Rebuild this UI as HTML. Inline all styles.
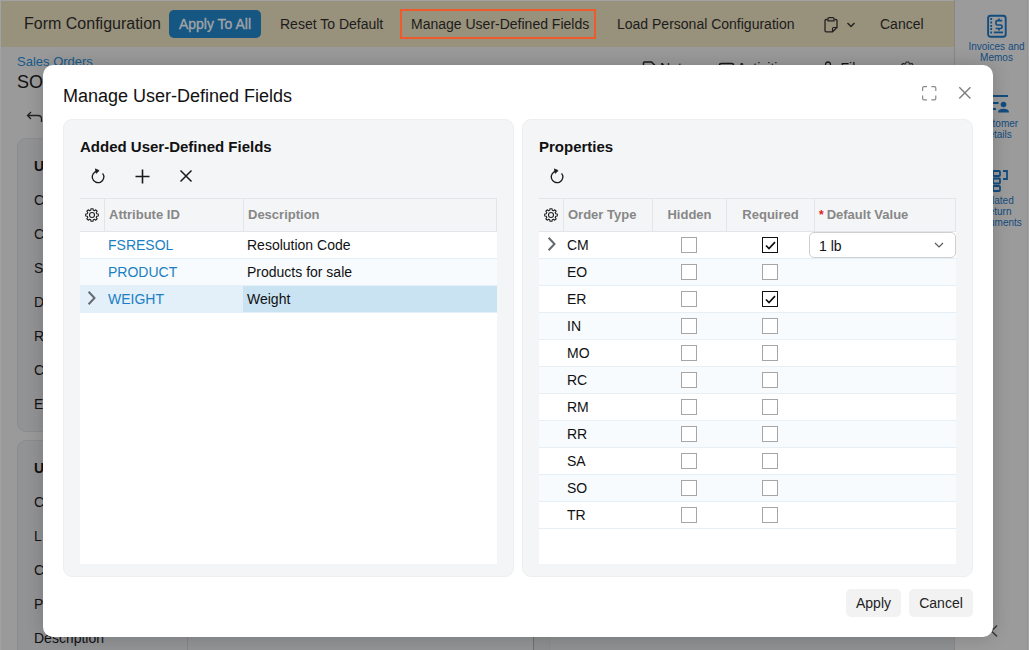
<!DOCTYPE html>
<html><head><meta charset="utf-8">
<style>
*{box-sizing:border-box;margin:0;padding:0}
html,body{width:1029px;height:650px;overflow:hidden}
body{font-family:"Liberation Sans",sans-serif;background:#9a9a9a;position:relative;color:#000}
.abs{position:absolute}
svg{position:absolute;overflow:visible}
/* top bar */
#topline{position:absolute;left:0;top:0;width:1029px;height:1px;background:#a2a2a6}
#leftline{position:absolute;left:0;top:0;width:1px;height:650px;background:#a2a2a6}
#topbar{position:absolute;left:1px;top:1px;width:953px;height:46px;background:#98917b}
.t{position:absolute;font-size:14px;color:#1c1c1c;white-space:nowrap;line-height:16px}
#applyall{position:absolute;left:169px;top:10px;width:92px;height:28px;background:#155682;border-radius:5px;color:#a1a4a6;-webkit-text-stroke:0.35px #a1a4a6;font-size:14px;line-height:28px;text-align:center}
#mudf{position:absolute;left:400px;top:9px;width:196px;height:30px;border:2px solid #ee5a2c}
/* sidebar */
#side{position:absolute;left:954px;top:0;width:75px;height:650px;background:#9b9b9b;border-left:1px solid #878787}
.stx{position:absolute;left:4px;width:75px;text-align:center;font-size:10px;line-height:11px;color:#134c7e}
/* bg page */
.bgt{position:absolute;white-space:nowrap;color:#111;line-height:16px}
.card{position:absolute;left:17px;width:517px;background:#929395;border:1px solid #8b8c8d;border-radius:9px}
/* dialog */
#dlg{position:absolute;left:43px;top:65px;width:950px;height:572px;background:#fff;border-radius:10px;box-shadow:0 0 18px rgba(0,0,0,0.18)}
.panel{position:absolute;top:54px;width:451px;height:458px;background:#f4f5f7;border:1px solid #eceef0;border-radius:9px}
.ptitle{position:absolute;left:16px;top:19px;font-size:15px;font-weight:bold;color:#111;line-height:16px}
.grid{position:absolute;left:16px;top:78px;width:417px;height:366px;background:#fff}
.ghead{position:absolute;left:0;top:0;width:100%;height:34px;background:#f4f5f7;border-top:1px solid #e3e5e8;border-bottom:1px solid #e3e5e8;border-right:1px solid #e3e5e8}
.hc{position:absolute;top:0;height:32px;line-height:32px;font-size:13px;font-weight:bold;color:#878787;border-left:1px solid #e3e5e8;padding-left:4px;white-space:nowrap}
.row{position:absolute;left:0;width:100%;height:27px;border-bottom:1px solid #e6eff6}
.alt{background:#f7fbfd}
.cell{position:absolute;top:0;height:26px;line-height:26px;font-size:14px;white-space:nowrap;color:#111}
.lnk{color:#1a7fc4}
.cb{position:absolute;top:5px;width:16px;height:16px;border:1px solid #a6a6a6;background:#fff;border-radius:0}
.cb.on{border:1.5px solid #111}
.btn{position:absolute;top:524px;height:28px;line-height:28px;background:#f2f2f2;border-radius:5px;font-size:14px;color:#222;text-align:center}
</style></head>
<body>
<div id="topbar">
  <div class="t" style="left:23px;top:14px;font-size:16px;line-height:18px">Form Configuration</div>
  <div id="applyall" style="left:168px;top:9px">Apply To All</div>
  <div class="t" style="left:279px;top:15px">Reset To Default</div>
  <div id="mudf" style="left:399px;top:8px"></div>
  <div class="t" style="left:410px;top:15px">Manage User-Defined Fields</div>
  <div class="t" style="left:616px;top:15px">Load Personal Configuration</div>
  <svg style="left:822px;top:15px" width="16" height="17" viewBox="0 0 16 17">
    <path d="M4.5 3.5 H3.2 Q2 3.5 2 4.8 V14.5 Q2 15.8 3.2 15.8 H9.5 L14 11.5 V4.8 Q14 3.5 12.8 3.5 H11.5" fill="none" stroke="#222" stroke-width="1.3"/>
    <path d="M5 4.8 V2.6 Q5 1.6 6 1.6 H10 Q11 1.6 11 2.6 V4.8 Z" fill="none" stroke="#222" stroke-width="1.2"/>
    <path d="M9.5 15.8 V12.8 Q9.5 11.5 10.8 11.5 H14" fill="none" stroke="#222" stroke-width="1.2"/>
  </svg>
  <svg style="left:844.5px;top:19.5px" width="10" height="8" viewBox="0 0 10 8">
    <path d="M1.5 2 L5 5.5 L8.5 2" fill="none" stroke="#222" stroke-width="1.5"/>
  </svg>
  <div class="t" style="left:879px;top:15px">Cancel</div>
</div>
<div id="topline"></div>
<div id="leftline"></div>

<div id="side">
  <svg style="left:32px;top:14px" width="20" height="24" viewBox="0 0 20 24">
    <rect x="1.1" y="1.8" width="17.6" height="21" rx="2.5" fill="none" stroke="#134c7e" stroke-width="1.9"/>
    <path d="M4.2 5 V5.2 M4.2 8.5 V8.7 M4.2 11.8 V12 M4.2 15 V15.2 M4.2 18.3 V18.5" stroke="#134c7e" stroke-width="1.8" stroke-linecap="square"/>
    <path d="M6.8 18.4 H16" stroke="#134c7e" stroke-width="1.8"/>
    <path d="M15.2 6.6 H10.2 Q9 6.6 9 7.8 V9.8 Q9 11 10.2 11 H13.8 Q15 11 15 12.2 V13.3 Q15 14.5 13.8 14.5 H8.6" fill="none" stroke="#134c7e" stroke-width="1.7"/>
    <path d="M12 4.4 V6.6 M12 14.5 V16.4" stroke="#134c7e" stroke-width="1.7"/>
  </svg>
  <div class="stx" style="top:41px">Invoices and<br>Memos</div>
  <svg style="left:30px;top:94px" width="26" height="20" viewBox="0 0 26 20">
    <path d="M5 2 H23" stroke="#134c7e" stroke-width="2"/>
    <path d="M5 9 H13.5 M5 15 H11" stroke="#134c7e" stroke-width="2"/>
    <circle cx="18.5" cy="10.5" r="2.8" fill="#134c7e"/>
    <path d="M13 18.5 Q13 14.8 18.5 14.8 Q24 14.8 24 18.5 Z" fill="#134c7e"/>
  </svg>
  <div class="stx" style="top:118px">Customer<br>Details</div>
  <svg style="left:35px;top:169px" width="26" height="24" viewBox="0 0 26 24">
    <rect x="3" y="2" width="7" height="5" rx="1" fill="none" stroke="#134c7e" stroke-width="1.8"/>
    <rect x="3" y="9.5" width="7" height="5" rx="1" fill="none" stroke="#134c7e" stroke-width="1.8"/>
    <rect x="3" y="17" width="7" height="5" rx="1" fill="none" stroke="#134c7e" stroke-width="1.8"/>
    <path d="M13 2 H17 V10 H13" fill="none" stroke="#134c7e" stroke-width="1.8"/>
  </svg>
  <div class="stx" style="top:195px">Related<br>Return<br>Documents</div>
</div>

<div class="abs" style="left:1027px;top:0;width:1px;height:650px;background:#939393"></div>
<div class="abs" style="left:1028px;top:0;width:1px;height:650px;background:#a6a6a6"></div>
<!-- background page -->
<div class="bgt" style="left:17px;top:54px;font-size:13px;color:#175a8a">Sales Orders</div>
<div class="bgt" style="left:17px;top:72px;font-size:18px;line-height:20px">SO</div>
<svg style="left:26px;top:110px" width="18" height="14" viewBox="0 0 18 14">
  <path d="M5 2 L1.5 5.5 L5 9 M1.5 5.5 H12 Q15.5 5.5 15.5 9 V12" fill="none" stroke="#222" stroke-width="1.3"/>
</svg>
<svg style="left:635px;top:55px" width="300" height="10" viewBox="0 0 300 10">
  <path d="M8.5 10 V8 Q8.5 7 9.5 7 H16.5 L20 10.5" fill="none" stroke="#1a1a1a" stroke-width="1.5"/>
  <path d="M84.5 10 Q84.5 8.5 86.5 8.5 H96.5 Q98.5 8.5 98.5 10" fill="none" stroke="#1a1a1a" stroke-width="1.5"/>
  <path d="M190.5 10 Q190.5 7 193 7 Q195.5 7 195.5 10" fill="none" stroke="#1a1a1a" stroke-width="1.3"/>
  <path d="M266.5 10 L268 8.5 L270 9 L271.5 7 L273.5 7 L275 9 L277 8.5 L278 10" fill="none" stroke="#2a2a2a" stroke-width="1.2"/>
</svg>
<div class="bgt" style="left:660px;top:60px;font-size:14px">Notes</div>
<div class="bgt" style="left:737px;top:60px;font-size:14px">Activities</div>
<div class="bgt" style="left:840.5px;top:60px;font-size:14px">Files</div>
<div class="card" style="top:138px;height:294px"></div>
<div class="bgt" style="left:34px;top:158px;font-size:14px;font-weight:bold">U</div>
<div class="bgt" style="left:34px;top:192px;font-size:14px">C</div>
<div class="bgt" style="left:34px;top:226px;font-size:14px">C</div>
<div class="bgt" style="left:34px;top:260px;font-size:14px">S</div>
<div class="bgt" style="left:34px;top:294px;font-size:14px">D</div>
<div class="bgt" style="left:34px;top:328px;font-size:14px">R</div>
<div class="bgt" style="left:34px;top:362px;font-size:14px">C</div>
<div class="bgt" style="left:34px;top:396px;font-size:14px">E</div>
<div class="card" style="top:440px;height:260px"></div>
<div class="bgt" style="left:34px;top:460px;font-size:14px;font-weight:bold">U</div>
<div class="bgt" style="left:34px;top:494px;font-size:14px">C</div>
<div class="bgt" style="left:34px;top:528px;font-size:14px">L</div>
<div class="bgt" style="left:34px;top:562px;font-size:14px">C</div>
<div class="bgt" style="left:34px;top:596px;font-size:14px">P</div>
<div class="bgt" style="left:34px;top:630px;font-size:14px">Description</div>
<div class="abs" style="left:187px;top:600px;width:1px;height:50px;background:#858585"></div>
<div class="abs" style="left:550px;top:600px;width:404px;height:50px;background:#8f9091"></div>
<div class="abs" style="left:533px;top:600px;width:17px;height:50px;background:#8d8e8f;border-left:1px solid #707070;border-right:1px solid #8a8a8a"></div>
<svg style="left:988px;top:624px" width="12" height="14" viewBox="0 0 12 14">
  <path d="M9 1.5 L3.5 7 L9 12.5" fill="none" stroke="#3a3a3a" stroke-width="1.6"/>
</svg>

<div id="dlg">
  <div class="abs" style="left:20px;top:21px;font-size:18px;line-height:20px;color:#111">Manage User-Defined Fields</div>
  <svg style="left:879px;top:21px" width="15" height="15" viewBox="0 0 15 15">
    <path d="M0.6 5 V2 Q0.6 0.6 2 0.6 H5 M9.4 0.6 H12.4 Q13.8 0.6 13.8 2 V5 M13.8 9.4 V12.4 Q13.8 13.8 12.4 13.8 H9.4 M5 13.8 H2 Q0.6 13.8 0.6 12.4 V9.4" fill="none" stroke="#8a8a8a" stroke-width="1.2"/>
  </svg>
  <svg style="left:915px;top:21px" width="14" height="14" viewBox="0 0 14 14">
    <path d="M1.3 1.3 L12.4 12.4 M12.4 1.3 L1.3 12.4" stroke="#7d7d7d" stroke-width="1.4"/>
  </svg>

  <div class="panel" style="left:20px">
    <div class="ptitle">Added User-Defined Fields</div>
    <svg style="left:26px;top:47.5px" width="16" height="16" viewBox="0 0 16 16">
      <path d="M12.6 5.3 A5.8 5.8 0 1 1 7.6 3.1" fill="none" stroke="#1a1a1a" stroke-width="1.3"/>
      <path d="M5.4 0.9 L9.1 2.6 L6.3 5.3 Z" fill="#1a1a1a" stroke="#1a1a1a" stroke-width="0.8" stroke-linejoin="round"/>
    </svg>
    <svg style="left:71px;top:49px" width="16" height="16" viewBox="0 0 16 16">
      <path d="M7.5 0.5 V14.5 M0.5 7.5 H14.5" stroke="#1a1a1a" stroke-width="1.6"/>
    </svg>
    <svg style="left:115px;top:49px" width="14" height="14" viewBox="0 0 14 14">
      <path d="M1.5 1.5 L12.5 12.5 M12.5 1.5 L1.5 12.5" stroke="#1a1a1a" stroke-width="1.5"/>
    </svg>
    <div class="grid">
      <div class="ghead">
        <svg style="left:12px;top:16px" width="1" height="1" viewBox="0 0 1 1">
          <path d="M4.74 -1.24 L6.32 -1.02 L6.32 1.02 L4.74 1.24 L4.23 2.47 L5.19 3.75 L3.75 5.19 L2.47 4.23 L1.24 4.74 L1.02 6.32 L-1.02 6.32 L-1.24 4.74 L-2.47 4.23 L-3.75 5.19 L-5.19 3.75 L-4.23 2.47 L-4.74 1.24 L-6.32 1.02 L-6.32 -1.02 L-4.74 -1.24 L-4.23 -2.47 L-5.19 -3.75 L-3.75 -5.19 L-2.47 -4.23 L-1.24 -4.74 L-1.02 -6.32 L1.02 -6.32 L1.24 -4.74 L2.47 -4.23 L3.75 -5.19 L5.19 -3.75 L4.23 -2.47Z" fill="none" stroke="#222" stroke-width="1.1" stroke-linejoin="round"/>
          <circle cx="0" cy="0" r="2.5" fill="none" stroke="#222" stroke-width="1.1"/>
        </svg>
        <div class="hc" style="left:24px;width:139px">Attribute ID</div>
        <div class="hc" style="left:163px;width:255px">Description</div>
      </div>
      <div class="row" style="top:34px"><div class="cell lnk" style="left:28px">FSRESOL</div><div class="cell" style="left:167px">Resolution Code</div></div>
      <div class="row alt" style="top:61px"><div class="cell lnk" style="left:28px">PRODUCT</div><div class="cell" style="left:167px">Products for sale</div></div>
      <div class="row" style="top:88px;background:#e3f0f9;border-bottom-color:#e3f0f9">
        <svg style="left:7px;top:5px" width="10" height="14" viewBox="0 0 10 14"><path d="M1.6 0.8 L7.5 7 L1.6 13.2" fill="none" stroke="#646a70" stroke-width="2"/></svg>
        <div class="cell lnk" style="left:28px">WEIGHT</div><div class="abs" style="left:163px;top:0;width:254px;height:26px;background:#c9e3f3"></div><div class="cell" style="left:167px">Weight</div></div>
    </div>
  </div>

  <div class="panel" style="left:479px">
    <div class="ptitle">Properties</div>
    <svg style="left:26px;top:47.5px" width="16" height="16" viewBox="0 0 16 16">
      <path d="M12.6 5.3 A5.8 5.8 0 1 1 7.6 3.1" fill="none" stroke="#1a1a1a" stroke-width="1.3"/>
      <path d="M5.4 0.9 L9.1 2.6 L6.3 5.3 Z" fill="#1a1a1a" stroke="#1a1a1a" stroke-width="0.8" stroke-linejoin="round"/>
    </svg>
    <div class="grid" id="pgrid">
      <div class="ghead">
        <svg style="left:12px;top:16px" width="1" height="1" viewBox="0 0 1 1">
          <path d="M4.74 -1.24 L6.32 -1.02 L6.32 1.02 L4.74 1.24 L4.23 2.47 L5.19 3.75 L3.75 5.19 L2.47 4.23 L1.24 4.74 L1.02 6.32 L-1.02 6.32 L-1.24 4.74 L-2.47 4.23 L-3.75 5.19 L-5.19 3.75 L-4.23 2.47 L-4.74 1.24 L-6.32 1.02 L-6.32 -1.02 L-4.74 -1.24 L-4.23 -2.47 L-5.19 -3.75 L-3.75 -5.19 L-2.47 -4.23 L-1.24 -4.74 L-1.02 -6.32 L1.02 -6.32 L1.24 -4.74 L2.47 -4.23 L3.75 -5.19 L5.19 -3.75 L4.23 -2.47Z" fill="none" stroke="#222" stroke-width="1.1" stroke-linejoin="round"/>
          <circle cx="0" cy="0" r="2.5" fill="none" stroke="#222" stroke-width="1.1"/>
        </svg>
        <div class="hc" style="left:24px;width:89px">Order Type</div>
        <div class="hc" style="left:113px;width:74px;text-align:center;padding:0">Hidden</div>
        <div class="hc" style="left:187px;width:88px;text-align:center;padding:0">Required</div>
        <div class="hc" style="left:275px;width:143px"><span style="color:#e02020;font-size:12px;margin-right:3px">*</span>Default Value</div>
      </div>
      <div class="row" style="top:34px">
        <svg style="left:7.5px;top:5px" width="10" height="14" viewBox="0 0 10 14"><path d="M1.6 0.8 L7.5 7 L1.6 13.2" fill="none" stroke="#646a70" stroke-width="2"/></svg>
        <div class="cell" style="left:28px">CM</div><div class="cb" style="left:142px"></div><div class="cb on" style="left:223px"><svg style="left:1.5px;top:2.5px" width="11" height="9" viewBox="0 0 11 9"><path d="M1 4.5 L4 7.5 L10 1.2" fill="none" stroke="#111" stroke-width="1.7"/></svg></div>
        <div class="abs" style="left:270px;top:0px;width:147px;height:26px;background:#fff;border:1px solid #cfcfcf;border-radius:5px">
          <div class="cell" style="left:9px;top:1px;height:24px;line-height:24px">1 lb</div>
          <svg style="left:124px;top:9px" width="10" height="6" viewBox="0 0 10 6"><path d="M1 1 L5 5 L9 1" fill="none" stroke="#555" stroke-width="1.1"/></svg>
        </div>
      </div>
      <div class="row alt" style="top:61px"><div class="cell" style="left:28px">EO</div><div class="cb" style="left:142px"></div><div class="cb" style="left:223px"></div></div>
      <div class="row" style="top:88px"><div class="cell" style="left:28px">ER</div><div class="cb" style="left:142px"></div><div class="cb on" style="left:223px"><svg style="left:1.5px;top:2.5px" width="11" height="9" viewBox="0 0 11 9"><path d="M1 4.5 L4 7.5 L10 1.2" fill="none" stroke="#111" stroke-width="1.7"/></svg></div></div>
      <div class="row alt" style="top:115px"><div class="cell" style="left:28px">IN</div><div class="cb" style="left:142px"></div><div class="cb" style="left:223px"></div></div>
      <div class="row" style="top:142px"><div class="cell" style="left:28px">MO</div><div class="cb" style="left:142px"></div><div class="cb" style="left:223px"></div></div>
      <div class="row alt" style="top:169px"><div class="cell" style="left:28px">RC</div><div class="cb" style="left:142px"></div><div class="cb" style="left:223px"></div></div>
      <div class="row" style="top:196px"><div class="cell" style="left:28px">RM</div><div class="cb" style="left:142px"></div><div class="cb" style="left:223px"></div></div>
      <div class="row alt" style="top:223px"><div class="cell" style="left:28px">RR</div><div class="cb" style="left:142px"></div><div class="cb" style="left:223px"></div></div>
      <div class="row" style="top:250px"><div class="cell" style="left:28px">SA</div><div class="cb" style="left:142px"></div><div class="cb" style="left:223px"></div></div>
      <div class="row alt" style="top:277px"><div class="cell" style="left:28px">SO</div><div class="cb" style="left:142px"></div><div class="cb" style="left:223px"></div></div>
      <div class="row" style="top:304px"><div class="cell" style="left:28px">TR</div><div class="cb" style="left:142px"></div><div class="cb" style="left:223px"></div></div>
    </div>
  </div>
  <div class="btn" style="left:803px;width:55px">Apply</div>
  <div class="btn" style="left:866px;width:64px">Cancel</div>
</div>
</body></html>
